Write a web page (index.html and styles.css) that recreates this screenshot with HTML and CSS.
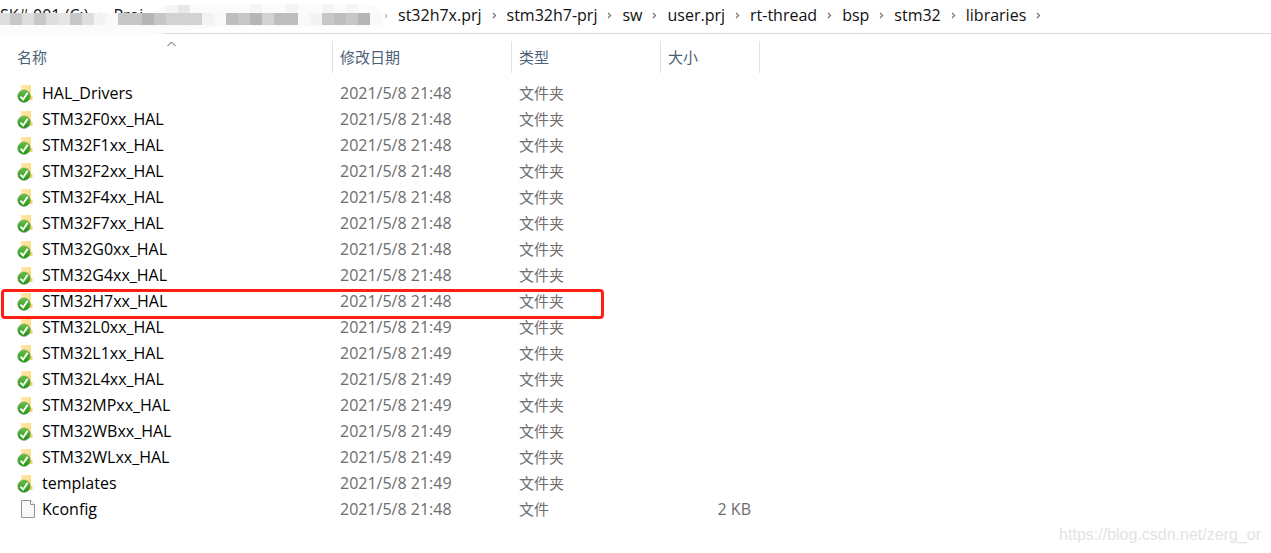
FILE: index.html
```
<!DOCTYPE html>
<html lang="zh-CN">

<head>
    <meta charset="UTF-8" />
    <meta name="viewport" content="width=device-width, initial-scale=1.0" />
    <title>libraries</title>
    <link rel="stylesheet" href="styles.css">
</head>

<body>
    <!-- shared icons -->
    <svg class="sprite" aria-hidden="true">
        <linearGradient id="folderFill" x1="0" y1="0" x2="1" y2="1">
            <stop offset="0" stop-color="#ffeaa8" />
            <stop offset="1" stop-color="#f7d377" />
        </linearGradient>
        <linearGradient id="badgeFill" x1="0" y1="0" x2="0" y2="1">
            <stop offset="0" stop-color="#6fc04a" />
            <stop offset="1" stop-color="#1f9412" />
        </linearGradient>
        <symbol id="folder" viewBox="0 0 18 20">
            <path d="M4 2h10v11h1v4H4z" fill="url(#folderFill)" />
            <path d="M13 13h2.500v4H13z" fill="#f5cf78" />
            <circle cx="7" cy="13.200" r="6.200" fill="url(#badgeFill)" stroke="#5c9c50" stroke-width=".6" />
            <path d="M3.500 13.700l2.600 2.800 4.500-6.700" fill="none" stroke="#fff" stroke-width="1.900" />
        </symbol>
        <symbol id="file" viewBox="0 0 18 20">
            <path d="M4.500 1.500h9l4 4v13h-13z" fill="#f8f9fa" stroke="#929292" />
            <path d="M13.500 1.500v4h4" fill="#fff" stroke="#929292" />
        </symbol>
        <symbol id="arrow" viewBox="0 0 5 7">
            <path d="M1 1l2.500 2.500L1 6" fill="none" stroke="#777" stroke-width="1.300" />
        </symbol>
    </svg>

    <nav class="address">
        <div class="crumbs root">
            <a href="#">SK# 001 (C:)</a>
            <svg class="arrow"><use href="#arrow" /></svg>
            <a href="#">Proj</a>
            <svg class="mosaic" viewBox="0 0 390 36" aria-hidden="true">
                <path d="M0 13h150l16-8h200q18 1 18 12t-24 10H220q-30 2-60 7-40 3-90 2H0z" fill="#fbfbfb" />
                <g shape-rendering="crispEdges">
                    <path d="M166 5h12v8h-12zM250 4h12v9h-12zM286 4h12v9h-12zM322 4h12v9h-12zM346 4h12v9h-12z" fill="#f5f5f5" />
                    <path d="M178 5h12v8h-12z" fill="#e8e8e8" />
                    <path d="M0 13h10v12H0zM22 13h12v12H22zM46 13h12v12H46zM82 13h12v12H82z" fill="#dedede" />
                    <path d="M58 13h12v12H58z" fill="#e5e5e5" />
                    <path d="M10 13h12v12H10zM34 13h12v12H34zM70 13h12v12H70zM118 13h24v12h-24zM154 13h12v12h-12zM238 13h12v12h-12zM322 13h12v12h-12zM346 13h12v12h-12z" fill="#c7c7c7" />
                    <path d="M94 13h12v12H94zM202 13h12v12h-12zM310 13h12v12h-12z" fill="#f3f3f3" />
                    <path d="M106 13h12v12h-12zM214 13h12v12h-12zM298 13h12v12h-12zM370 13h12v12h-12z" fill="#f9f9f9" />
                    <path d="M166 13h36v12h-36zM262 13h12v12h-12z" fill="#d2d2d2" />
                    <path d="M226 13h12v12h-12zM274 13h24v12h-24zM334 13h12v12h-12z" fill="#bebebe" />
                    <path d="M142 13h12v12h-12zM250 13h12v12h-12zM358 13h12v12h-12z" fill="#b5b5b5" />
                </g>
                <path d="M385 14l2 2-2 2" fill="none" stroke="#999" />
            </svg>
        </div>
        <div class="crumbs">
            <a href="#">st32h7x.prj</a>
            <svg class="arrow"><use href="#arrow" /></svg>
            <a href="#">stm32h7-prj</a>
            <svg class="arrow"><use href="#arrow" /></svg>
            <a href="#">sw</a>
            <svg class="arrow"><use href="#arrow" /></svg>
            <a href="#">user.prj</a>
            <svg class="arrow"><use href="#arrow" /></svg>
            <a href="#">rt-thread</a>
            <svg class="arrow"><use href="#arrow" /></svg>
            <a href="#">bsp</a>
            <svg class="arrow"><use href="#arrow" /></svg>
            <a href="#">stm32</a>
            <svg class="arrow"><use href="#arrow" /></svg>
            <a href="#">libraries</a>
            <svg class="arrow"><use href="#arrow" /></svg>
        </div>
    </nav>

    <table class="files">
        <thead>
            <tr>
                <th class="name" aria-sort="ascending">
                    <button type="button">名称</button>
                    <svg class="sort" viewBox="0 0 9 6"><path d="M.5 5l4-4 4 4" fill="none" stroke="#555" /></svg>
                </th>
                <th class="date"><button type="button">修改日期</button></th>
                <th class="type"><button type="button">类型</button></th>
                <th class="size"><button type="button">大小</button></th>
            </tr>
        </thead>
        <tbody>
            <tr><td class="name"><svg class="icon"><use href="#folder" /></svg>HAL_Drivers</td><td class="date">2021/5/8 21:48</td><td>文件夹</td><td></td></tr>
            <tr><td class="name"><svg class="icon"><use href="#folder" /></svg>STM32F0xx_HAL</td><td class="date">2021/5/8 21:48</td><td>文件夹</td><td></td></tr>
            <tr><td class="name"><svg class="icon"><use href="#folder" /></svg>STM32F1xx_HAL</td><td class="date">2021/5/8 21:48</td><td>文件夹</td><td></td></tr>
            <tr><td class="name"><svg class="icon"><use href="#folder" /></svg>STM32F2xx_HAL</td><td class="date">2021/5/8 21:48</td><td>文件夹</td><td></td></tr>
            <tr><td class="name"><svg class="icon"><use href="#folder" /></svg>STM32F4xx_HAL</td><td class="date">2021/5/8 21:48</td><td>文件夹</td><td></td></tr>
            <tr><td class="name"><svg class="icon"><use href="#folder" /></svg>STM32F7xx_HAL</td><td class="date">2021/5/8 21:48</td><td>文件夹</td><td></td></tr>
            <tr><td class="name"><svg class="icon"><use href="#folder" /></svg>STM32G0xx_HAL</td><td class="date">2021/5/8 21:48</td><td>文件夹</td><td></td></tr>
            <tr><td class="name"><svg class="icon"><use href="#folder" /></svg>STM32G4xx_HAL</td><td class="date">2021/5/8 21:48</td><td>文件夹</td><td></td></tr>
            <tr><td class="name marked"><svg class="icon"><use href="#folder" /></svg>STM32H7xx_HAL</td><td class="date">2021/5/8 21:48</td><td>文件夹</td><td></td></tr>
            <tr><td class="name"><svg class="icon"><use href="#folder" /></svg>STM32L0xx_HAL</td><td class="date">2021/5/8 21:49</td><td>文件夹</td><td></td></tr>
            <tr><td class="name"><svg class="icon"><use href="#folder" /></svg>STM32L1xx_HAL</td><td class="date">2021/5/8 21:49</td><td>文件夹</td><td></td></tr>
            <tr><td class="name"><svg class="icon"><use href="#folder" /></svg>STM32L4xx_HAL</td><td class="date">2021/5/8 21:49</td><td>文件夹</td><td></td></tr>
            <tr><td class="name"><svg class="icon"><use href="#folder" /></svg>STM32MPxx_HAL</td><td class="date">2021/5/8 21:49</td><td>文件夹</td><td></td></tr>
            <tr><td class="name"><svg class="icon"><use href="#folder" /></svg>STM32WBxx_HAL</td><td class="date">2021/5/8 21:49</td><td>文件夹</td><td></td></tr>
            <tr><td class="name"><svg class="icon"><use href="#folder" /></svg>STM32WLxx_HAL</td><td class="date">2021/5/8 21:49</td><td>文件夹</td><td></td></tr>
            <tr><td class="name"><svg class="icon"><use href="#folder" /></svg>templates</td><td class="date">2021/5/8 21:49</td><td>文件夹</td><td></td></tr>
            <tr><td class="name"><svg class="icon"><use href="#file" /></svg>Kconfig</td><td class="date">2021/5/8 21:48</td><td>文件</td><td class="size">2 KB</td></tr>
        </tbody>
    </table>

    <div class="watermark">https://blog.csdn.net/zerg_or</div>
</body>

</html>
```
FILE: styles.css
```
*,
*::after {
    box-sizing: border-box;
}

body {
    margin: 0;
    background: #fff;
    color: #000;
    font-family: "Open Sans", "Noto Sans CJK SC", sans-serif;
    font-size: 16px;
    line-height: 20px;
}

.sprite {
    position: absolute;
    width: 0;
    height: 0;
}

.address {
    display: flex;
    height: 34px;
    padding-top: 5px;
    border-bottom: 1px solid #d9d9d9;
}

.crumbs {
    display: flex;
    align-items: center;
    gap: 10px;
    height: 20px;
    white-space: nowrap;
}

.crumbs a {
    color: #111;
    text-decoration: none;
}

.root {
    position: relative;
    width: 398px;
    flex-shrink: 0;
}

.arrow {
    width: 5px;
    height: 7px;
    flex-shrink: 0;
}

/* hides the private part of the path */
.mosaic {
    position: absolute;
    left: 0;
    top: -5px;
    width: 390px;
    height: 36px;
}

.files {
    table-layout: fixed;
    width: 760px;
    border-collapse: collapse;
}

th {
    position: relative;
    height: 46px;
    padding: 7px 0;
    font-weight: normal;
}

th button {
    display: block;
    width: 100%;
    height: 32px;
    padding: 0 0 1px 7px;
    border: 0;
    border-right: 1px solid #e2e2e2;
    background: none;
    color: #4c607a;
    font: inherit;
    text-align: left;
}

th.name button {
    padding-left: 17px;
}

th.name {
    width: 333px;
}

th.date {
    width: 179px;
}

th.type {
    width: 149px;
}

.sort {
    position: absolute;
    left: 167px;
    top: 7px;
    width: 9px;
    height: 6px;
}

th,
td {
    font-family: "Noto Sans", "Noto Sans CJK SC", sans-serif;
    font-size: 15px;
}

td {
    height: 26px;
    padding: 0 0 0 7px;
    color: #6d6d6d;
}

td.name {
    padding-left: 17px;
    color: #000;
}

td.name,
td.date,
td.size {
    font-family: "Open Sans", sans-serif;
    font-size: 16px;
}

td.size {
    padding-right: 9px;
    text-align: right;
}

.icon {
    width: 18px;
    height: 20px;
    margin-right: 7px;
    vertical-align: top;
}

.marked {
    position: relative;
}

.marked::after {
    content: "";
    position: absolute;
    left: 1px;
    top: 1px;
    width: 603px;
    height: 30px;
    border: 3px solid #ff1f12;
    border-radius: 4px;
}

.watermark {
    position: absolute;
    right: 10px;
    bottom: 8px;
    color: #e3e3e3;
    font-family: "Liberation Sans", Arial, sans-serif;
    font-size: 16px;
}
```
